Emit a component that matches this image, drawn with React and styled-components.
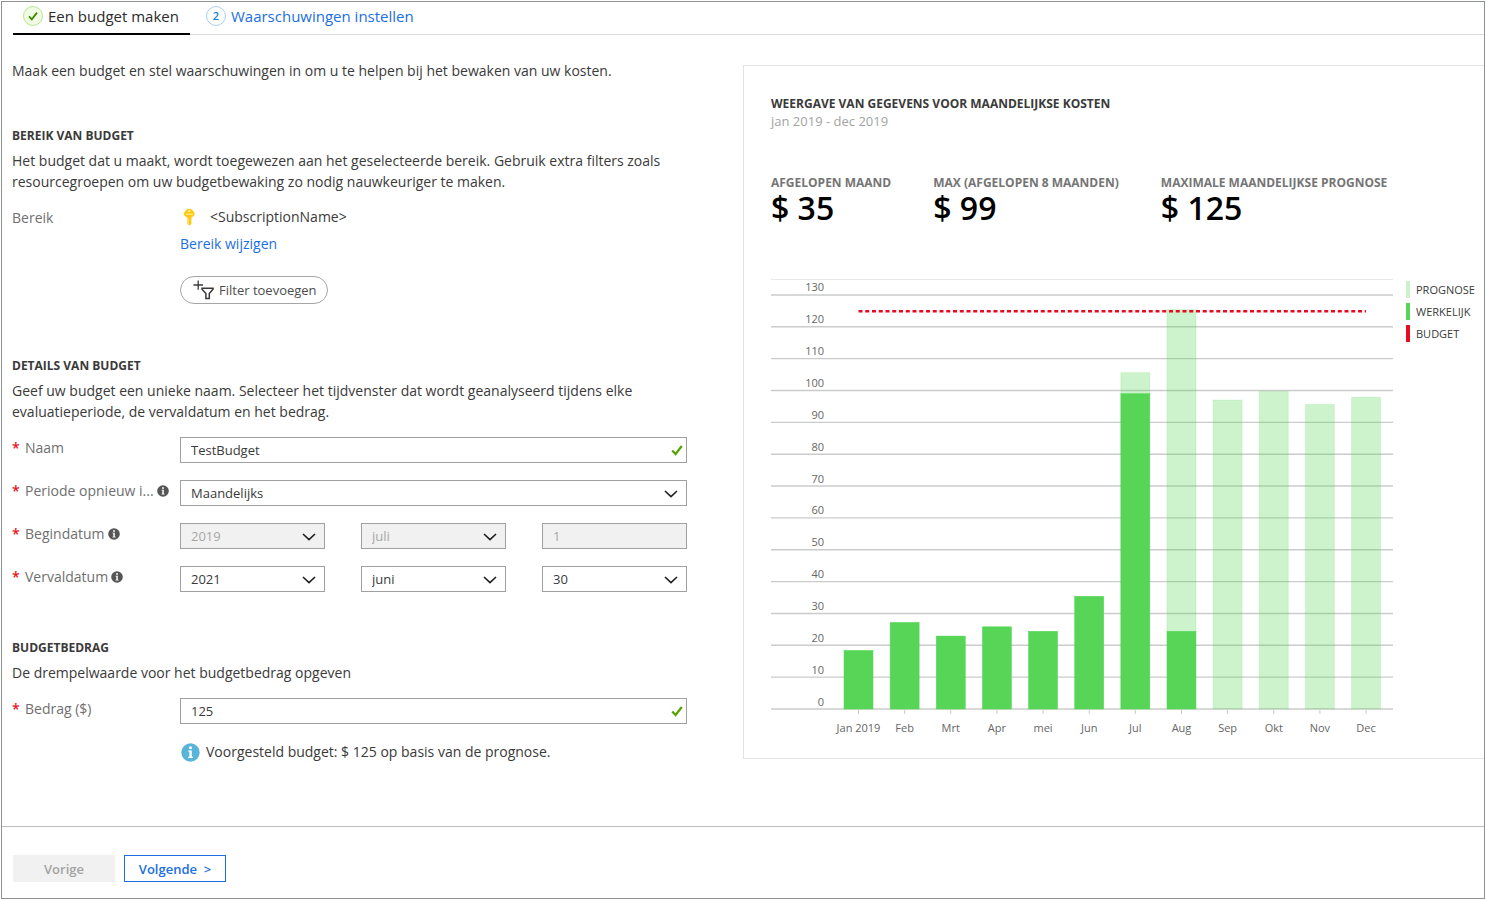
import React, { useState } from "react";
import styled, { createGlobalStyle } from "styled-components";

const GlobalStyle = createGlobalStyle`
  * {
    box-sizing: border-box;
  }
  body {
    margin: 0;
    background: #fff;
    color: #3a3a3a;
    font-family: "Open Sans", "Noto Sans", sans-serif;
    font-size: 14px;
    line-height: 20px;
  }
  button, input, select {
    font: inherit;
    color: inherit;
  }
`;

const Frame = styled.div`
  display: flex;
  flex-direction: column;
  min-height: calc(100vh - 2px);
  margin: 1px;
  border: 1px solid #8f9193;
`;

const Tabs = styled.nav`
  display: flex;
  gap: 16px;
  margin-left: 11px;
  border-bottom: 1px solid #dcdcdc;
`;

const Tab = styled.a`
  display: flex;
  align-items: center;
  gap: 5px;
  height: 33px;
  padding: 0 11px 3px ${props => (props.$active ? "10px" : "0")};
  margin-bottom: -1px;
  border-bottom: 2px solid ${props => (props.$active ? "#000" : "transparent")};
  color: ${props => (props.$active ? "#2b2b2b" : "#1b6fe0")};
  font-size: 15px;
  text-decoration: none;
`;

const StepBadge = styled.span`
  display: flex;
  align-items: center;
  justify-content: center;
  width: 20px;
  height: 20px;
  border: 1px solid ${props => (props.$done ? "#b9e58f" : "#a9cdf5")};
  border-radius: 50%;
  background: ${props => (props.$done ? "#f1fbe4" : "#fff")};
  color: #1480d8;
  font-size: 11px;
  font-weight: 600;
`;

const Main = styled.main`
  flex: 1;
  display: grid;
  grid-template-columns: minmax(0, 675fr) minmax(0, 741fr);
  align-items: start;
  gap: 56px;
  padding: 0 0 48px 10px;
`;

const Form = styled.form`
  padding-top: 26px;
`;

const Intro = styled.p`
  margin: 0;
`;

const Section = styled.section`
  margin-top: ${props => props.$space}px;
`;

const Heading = styled.h2`
  margin: 0;
  color: #3a3a3a;
  font-size: 12px;
  font-weight: 700;
  line-height: 20px;
`;

const Paragraph = styled.p`
  margin: 4px 0 15px;
  line-height: 21px;
`;

const Field = styled.div`
  display: grid;
  grid-template-columns: 168px minmax(0, 1fr);
  & + & {
    margin-top: 17px;
  }
`;

const Label = styled.label`
  display: flex;
  align-items: center;
  height: 22px;
  color: #6f6f6f;
  white-space: nowrap;
  svg {
    margin-left: 3px;
  }
`;

const Required = styled.span`
  width: 13px;
  color: #e81123;
  font-weight: 600;
`;

const Control = styled.div`
  position: relative;
  > svg {
    position: absolute;
    top: 7px;
    right: ${props => (props.$valid ? "4px" : "9px")};
    pointer-events: none;
  }
`;

const Dates = styled.div`
  display: grid;
  grid-template-columns: repeat(3, minmax(0, 1fr));
  gap: 36px;
`;

const TextBox = styled.input`
  display: block;
  width: 100%;
  height: 26px;
  padding: 0 10px;
  border: 1px solid #a0a0a0;
  border-radius: 0;
  background: #fff;
  font-size: 13px;
  &:disabled {
    background: #f1f1f1;
    color: #a8a8a8;
  }
`;

const Select = styled(TextBox).attrs({ as: "select" })`
  appearance: none;
  opacity: 1;
`;

const Scope = styled.div`
  display: flex;
  align-items: center;
  height: 20px;
  gap: 12px;
`;

const Link = styled.a`
  display: block;
  margin-top: 7px;
  color: #1b6fe0;
  text-decoration: none;
`;

const FilterButton = styled.button`
  display: flex;
  align-items: center;
  gap: 4px;
  height: 28px;
  margin-top: 22px;
  padding: 0 10px 0 12px;
  border: 1px solid #a6a6a6;
  border-radius: 14px;
  background: #fff;
  color: #4d4d4d;
  font-size: 13px;
`;

const Hint = styled.div`
  display: flex;
  align-items: center;
  gap: 6px;
  margin: 18px 0 0 169px;
`;

const Card = styled.section`
  margin-top: 30px;
  padding: 29px 0 18px 27px;
  border: 1px solid #e3e3e3;
  border-right: 0;
`;

const Period = styled.div`
  color: #a3a3a3;
  font-size: 13px;
  line-height: 18px;
`;

const CardTitle = styled(Heading)`
  line-height: 17px;
`;

const Stats = styled.div`
  display: flex;
  gap: 42px;
  margin-top: 44px;
`;

const StatLabel = styled.div`
  color: #757575;
  font-size: 12px;
  font-weight: 700;
  line-height: 18px;
`;

const StatValue = styled.div`
  color: #000;
  font-size: 32px;
  font-weight: 600;
  line-height: 32px;
`;

const ChartArea = styled.div`
  display: flex;
  gap: 13px;
  margin-top: 46px;
`;

const ChartSvg = styled.svg`
  flex: 1;
  min-width: 0;
  font-size: 11px;
  fill: #666;
`;

const Legend = styled.ul`
  display: flex;
  flex-direction: column;
  gap: 5px;
  width: 78px;
  margin: 11px 0 0;
  padding: 0;
  list-style: none;
  font-size: 11px;
  line-height: 17px;
`;

const LegendItem = styled.li`
  display: flex;
  gap: 6px;
  &::before {
    content: "";
    width: 4px;
    background: ${props => props.$color};
  }
`;

const Footer = styled.footer`
  display: flex;
  gap: 9px;
  padding: 28px 11px 16px;
  border-top: 1px solid #bdbdbd;
`;

const FooterButton = styled.button`
  min-width: 102px;
  height: 27px;
  padding: 0;
  border: 1px solid ${props => (props.$primary ? "#1b6fe0" : "#f1f1f1")};
  background: ${props => (props.$primary ? "#fff" : "#f1f1f1")};
  color: ${props => (props.$primary ? "#1b6fe0" : "#a3a3a3")};
  font-size: 13px;
  font-weight: 600;
`;

const Check = ({ size = 12, color = "#57a300" }) => (
  <svg width={size} height={size} viewBox="0 0 12 12" fill="none" stroke={color} strokeWidth="2.2">
    <path d="M1.2 6.4 L4.6 10 L10.8 2" />
  </svg>
);

const Chevron = () => (
  <svg width="14" height="13" viewBox="0 0 14 13" fill="none" stroke="#1f1f1f" strokeWidth="1.6">
    <path d="M1 4 L7 9.6 L13 4" />
  </svg>
);

const InfoIcon = ({ size = 12, color = "#555" }) => (
  <svg width={size} height={size} viewBox="0 0 12 12">
    <circle cx="6" cy="6" r="5.8" fill={color} />
    <circle cx="6" cy="3" r="0.95" fill="#fff" />
    <path d="M4.6 4.8 H6.8 V8.7 H7.6 V9.5 H4.5 V8.7 H5.3 V5.6 H4.6 Z" fill="#fff" />
  </svg>
);

const KeyIcon = () => (
  <svg width="18" height="18" viewBox="0 0 17 17">
    <path d="M8.5 0.5 L11.5 1.6 L14 5.2 L13.4 7.2 L10.8 9.2 V14.8 L9 16.6 L7 15 V9.2 L4.2 7.2 L3.4 5.2 L5.8 1.6 Z" fill="#fdc913" />
    <path d="M5.4 5.4 H12 V6.3 H5.4 Z" fill="#fff1a8" />
    <circle cx="8.7" cy="2.8" r="1" fill="#fff6c8" />
    <path d="M8 9.5 V15.2" stroke="#ffe36b" strokeWidth="0.9" />
  </svg>
);

const FilterIcon = () => (
  <svg width="22" height="20" viewBox="0 0 22 20" fill="none" stroke="#3a3a3a">
    <path d="M0.5 5 H10 M5.2 0.5 V9.8" strokeWidth="1.3" />
    <path d="M9 8.2 H20 V9.2 L16.3 13.6 V18.6 H12.9 V13.6 L9 9.2 Z" strokeWidth="1.5" />
  </svg>
);

const months = [
  { name: "Jan 2019", actual: 18.4 },
  { name: "Feb", actual: 27.2 },
  { name: "Mrt", actual: 22.9 },
  { name: "Apr", actual: 25.8 },
  { name: "mei", actual: 24.4 },
  { name: "Jun", actual: 35.4 },
  { name: "Jul", actual: 99, forecast: 105.6 },
  { name: "Aug", actual: 24.4, forecast: 125.4 },
  { name: "Sep", forecast: 97 },
  { name: "Okt", forecast: 99.7 },
  { name: "Nov", forecast: 95.6 },
  { name: "Dec", forecast: 97.9 },
];

const BUDGET = 124.9;
const BASE = 439;
const STEP = 31.85;
const yFor = value => BASE - (value * STEP) / 10;
const xFor = index => 87.5 + index * 46.14;
const ticks = Array.from({ length: 14 }, (_, i) => i * 10);

const Bar = ({ x, from = 0, to, forecast }) => (
  <rect
    x={x - 14.5}
    y={yFor(to)}
    width="29"
    height={yFor(from) - yFor(to)}
    fill={forecast ? "rgba(86, 214, 86, 0.3)" : "#56d556"}
    stroke={forecast ? "rgba(86, 214, 86, 0.16)" : "#56d556"}
    strokeWidth={forecast ? 1 : 0.5}
  />
);

const Chart = () => (
  <ChartSvg viewBox="0 0 622 470" role="img" aria-label="Maandelijkse kosten">
    <path d="M0 9.5 H622" stroke="#e8e8e8" />
    {ticks.map(t => (
      <g key={t}>
        <path d={`M0 ${yFor(t)} H622`} stroke="#cbcbcb" strokeWidth="1.4" />
        <text x="53" y={yFor(t) - 3.5} textAnchor="end">{t}</text>
      </g>
    ))}
    {months.map(({ name, actual = 0, forecast }, index) => (
      <g key={name}>
        {forecast && <Bar x={xFor(index)} from={actual} to={forecast} forecast />}
        {actual > 0 && <Bar x={xFor(index)} to={actual} />}
        <path d={`M${xFor(index)} ${BASE + 1} v4`} stroke="#cbcbcb" />
        <text x={xFor(index)} y="462" textAnchor="middle">{name}</text>
      </g>
    ))}
    <path
      d={`M${xFor(0)} ${yFor(BUDGET)} H${xFor(11)}`}
      stroke="#e50b20"
      strokeWidth="2.4"
      strokeDasharray="4 2.75"
    />
  </ChartSvg>
);

const Dropdown = ({ options, ...rest }) => (
  <Control>
    <Select {...rest}>
      {options.map(o => <option key={o}>{o}</option>)}
    </Select>
    <Chevron />
  </Control>
);

const App = () => {
  const [name, setName] = useState("TestBudget");
  const [amount, setAmount] = useState("125");

  return (
    <Frame>
      <GlobalStyle />
      <Tabs>
        <Tab href="#budget" $active>
          <StepBadge $done><Check size={10} color="#3f8a00" /></StepBadge>
          Een budget maken
        </Tab>
        <Tab href="#waarschuwingen">
          <StepBadge>2</StepBadge>
          Waarschuwingen instellen
        </Tab>
      </Tabs>

      <Main>
        <Form id="budget" onSubmit={e => e.preventDefault()}>
          <Intro>Maak een budget en stel waarschuwingen in om u te helpen bij het bewaken van uw kosten.</Intro>

          <Section $space={45}>
            <Heading>BEREIK VAN BUDGET</Heading>
            <Paragraph>
              Het budget dat u maakt, wordt toegewezen aan het geselecteerde bereik. Gebruik extra filters zoals
              resourcegroepen om uw budgetbewaking zo nodig nauwkeuriger te maken.
            </Paragraph>
            <Field>
              <Label as="span">Bereik</Label>
              <div>
                <Scope><KeyIcon />&lt;SubscriptionName&gt;</Scope>
                <Link href="#bereik">Bereik wijzigen</Link>
                <FilterButton type="button"><FilterIcon />Filter toevoegen</FilterButton>
              </div>
            </Field>
          </Section>

          <Section $space={52}>
            <Heading>DETAILS VAN BUDGET</Heading>
            <Paragraph>
              Geef uw budget een unieke naam. Selecteer het tijdvenster dat wordt geanalyseerd tijdens elke
              evaluatieperiode, de vervaldatum en het bedrag.
            </Paragraph>
            <Field>
              <Label htmlFor="naam"><Required>*</Required>Naam</Label>
              <Control $valid>
                <TextBox id="naam" value={name} onChange={e => setName(e.target.value)} />
                <Check />
              </Control>
            </Field>
            <Field>
              <Label htmlFor="periode"><Required>*</Required>Periode opnieuw i...<InfoIcon /></Label>
              <Dropdown id="periode" options={["Maandelijks"]} />
            </Field>
            <Field>
              <Label htmlFor="begin"><Required>*</Required>Begindatum<InfoIcon /></Label>
              <Dates>
                <Dropdown id="begin" options={["2019"]} disabled />
                <Dropdown options={["juli"]} aria-label="Beginmaand" disabled />
                <TextBox defaultValue="1" aria-label="Begindag" disabled />
              </Dates>
            </Field>
            <Field>
              <Label htmlFor="verval"><Required>*</Required>Vervaldatum<InfoIcon /></Label>
              <Dates>
                <Dropdown id="verval" options={["2021"]} />
                <Dropdown options={["juni"]} aria-label="Vervalmaand" />
                <Dropdown options={["30"]} aria-label="Vervaldag" />
              </Dates>
            </Field>
          </Section>

          <Section $space={46}>
            <Heading>BUDGETBEDRAG</Heading>
            <Paragraph>De drempelwaarde voor het budgetbedrag opgeven</Paragraph>
            <Field>
              <Label htmlFor="bedrag"><Required>*</Required>Bedrag ($)</Label>
              <Control $valid>
                <TextBox id="bedrag" value={amount} onChange={e => setAmount(e.target.value)} />
                <Check />
              </Control>
            </Field>
            <Hint><InfoIcon size={19} color="#59b4d9" />Voorgesteld budget: $ 125 op basis van de prognose.</Hint>
          </Section>
        </Form>

        <Card>
          <CardTitle>WEERGAVE VAN GEGEVENS VOOR MAANDELIJKSE KOSTEN</CardTitle>
          <Period>jan 2019 - dec 2019</Period>
          <Stats>
            <div>
              <StatLabel>AFGELOPEN MAAND</StatLabel>
              <StatValue>$ 35</StatValue>
            </div>
            <div>
              <StatLabel>MAX (AFGELOPEN 8 MAANDEN)</StatLabel>
              <StatValue>$ 99</StatValue>
            </div>
            <div>
              <StatLabel>MAXIMALE MAANDELIJKSE PROGNOSE</StatLabel>
              <StatValue>$ 125</StatValue>
            </div>
          </Stats>
          <ChartArea>
            <Chart />
            <Legend>
              <LegendItem $color="#ccf2cc">PROGNOSE</LegendItem>
              <LegendItem $color="#56d556">WERKELIJK</LegendItem>
              <LegendItem $color="#e50b20">BUDGET</LegendItem>
            </Legend>
          </ChartArea>
        </Card>
      </Main>

      <Footer>
        <FooterButton disabled>Vorige</FooterButton>
        <FooterButton $primary>Volgende &nbsp;&gt;</FooterButton>
      </Footer>
    </Frame>
  );
};

export default App;
